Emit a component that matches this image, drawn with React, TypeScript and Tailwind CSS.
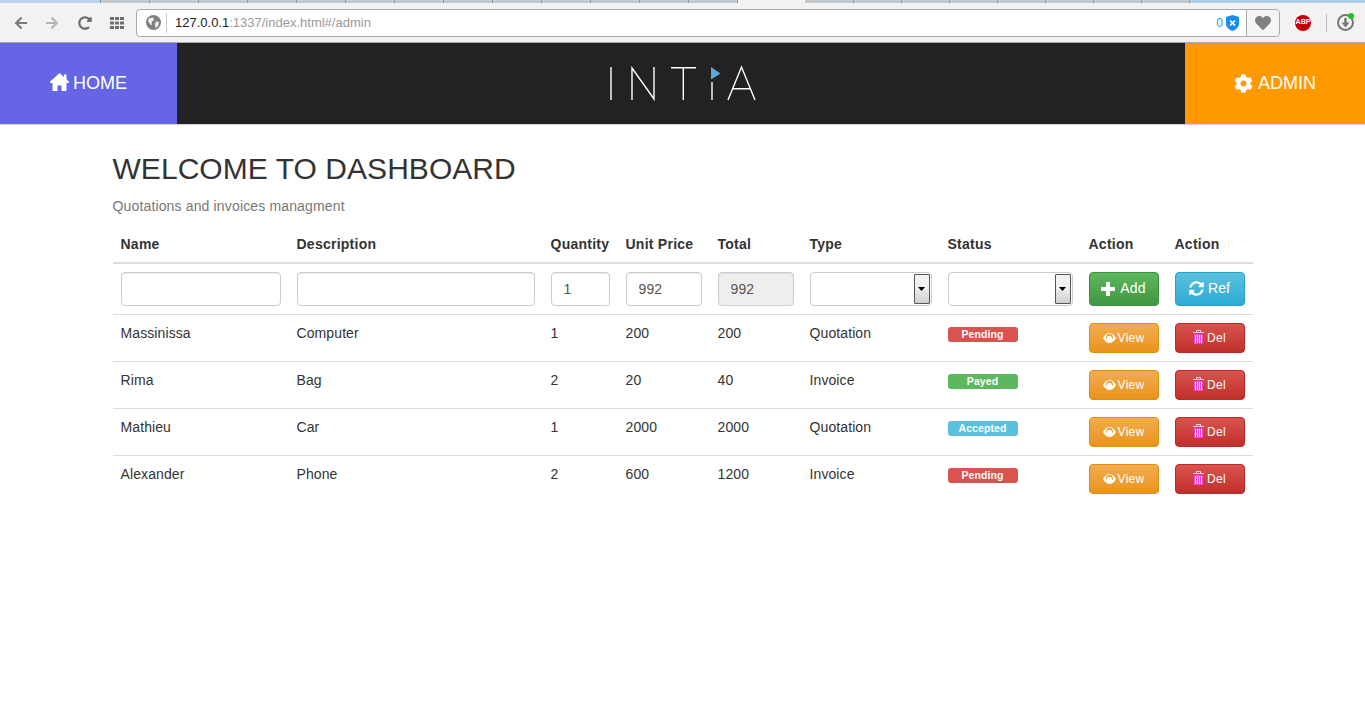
import type { ReactNode } from "react";
import { FaCog, FaSyncAlt, FaHeart, FaArrowLeft, FaArrowRight, FaRedoAlt } from "react-icons/fa";

const rows = [
  { name: "Massinissa", desc: "Computer", qty: "1", price: "200", total: "200", type: "Quotation", status: "Pending", color: "bg-[#d9534f]" },
  { name: "Rima", desc: "Bag", qty: "2", price: "20", total: "40", type: "Invoice", status: "Payed", color: "bg-[#5cb85c]" },
  { name: "Mathieu", desc: "Car", qty: "1", price: "2000", total: "2000", type: "Quotation", status: "Accepted", color: "bg-[#5bc0de]" },
  { name: "Alexander", desc: "Phone", qty: "2", price: "600", total: "1200", type: "Invoice", status: "Pending", color: "bg-[#d9534f]" },
];

const inputBase = "block w-full h-[34px] rounded border border-[#ccc] px-3 text-[14px] tracking-[0.15px] text-[#555] shadow-[inset_0_1px_1px_rgba(0,0,0,0.075)] outline-none";
const inputClass = `${inputBase} bg-white`;

function SelectBox() {
  return (
    <div className="flex h-[34px] w-full items-stretch justify-end rounded border border-[#ccc] bg-white p-px">
      <div className="flex w-[16px] items-center justify-center rounded-[1px] border border-[#555] bg-gradient-to-b from-[#f2f2f2] from-40% to-[#cfcfcf]">
        <svg width="7" height="4" viewBox="0 0 7 4"><path d="M0 0H7L3.5 4Z" fill="#000" /></svg>
      </div>
    </div>
  );
}

function Browser() {
  return (
    <div className="relative h-[43px] border-b border-[#a8a8a8] bg-[#f2f2f2]">
      <div className="flex h-[3px] bg-[#c3c9cf]">
        <div className="w-[101px] border-r border-[#8a9099] bg-[#bcd4ec]" />
        {Array.from({ length: 13 }).map((_, i) => (
          <div key={i} className="w-[49px] shrink-0 border-r border-[#8f959b]" />
        ))}
        <div className="w-[67px] shrink-0 bg-[#f2f2f2]" />
        <div className="w-[49px] shrink-0 border-r border-[#8f959b]" />
        {Array.from({ length: 7 }).map((_, i) => (
          <div key={i} className="w-[48px] shrink-0 border-r border-[#8f959b]" />
        ))}
        <div className="flex-1 bg-[#b3cde8]" />
      </div>
      <div className="flex h-[39px] items-center pl-[14px]">
        <FaArrowLeft size={14} className="text-[#7b7b7b]" />
        <FaArrowRight size={14} className="ml-[17px] text-[#b4b4b4]" />
        <FaRedoAlt size={14} className="ml-[19px] text-[#6e6e6e]" />
        <svg width="14" height="12" viewBox="0 0 14 12" className="ml-[18px]" fill="#6e6e6e">
          <rect x="0" y="0" width="4" height="3" /><rect x="5" y="0" width="4" height="3" /><rect x="10" y="0" width="4" height="3" />
          <rect x="0" y="4.5" width="4" height="3" /><rect x="5" y="4.5" width="4" height="3" /><rect x="10" y="4.5" width="4" height="3" />
          <rect x="0" y="9" width="4" height="3" /><rect x="5" y="9" width="4" height="3" /><rect x="10" y="9" width="4" height="3" />
        </svg>
        <div className="ml-[12px] flex h-[28px] w-[1144px] items-center rounded-[4px] border border-[#a9a9a9] bg-white">
          <svg width="15" height="15" viewBox="0 0 15 15" className="ml-[9px]">
            <circle cx="7.5" cy="7.5" r="7.5" fill="#808080" />
            <path d="M3 3.5L7 2.5L8 5L5.5 7L6 10.5L4 9L2 6ZM10 6.5L13 7L12 11L9.5 13L9 9Z" fill="#f2f2f2" />
          </svg>
          <div className="ml-[5px] h-[20px] w-px bg-[#ccc]" />
          <span className="ml-[8px] text-[13px] text-[#9a9a9a]">
            <span className="text-[#222]">127.0.0.1</span>:1337/index.html#/admin
          </span>
          <span className="ml-auto text-[12px] text-[#2b9af3]">0</span>
          <svg width="13" height="16" viewBox="0 0 13 16" className="ml-[3px] mr-[7px]">
            <path d="M6.5 0L13 2V9C13 12 9.5 15 6.5 16C3.5 15 0 12 0 9V2Z" fill="#1a8cf0" />
            <path d="M4 5.5L9 10.5M9 5.5L4 10.5" stroke="#fff" strokeWidth="1.6" />
          </svg>
          <div className="flex h-full w-[33px] items-center justify-center rounded-r-[4px] border-l border-[#a9a9a9] bg-[#f5f5f5]">
            <FaHeart size={16} className="text-[#808080]" />
          </div>
        </div>
        <div className="ml-[15px] flex h-[16px] w-[16px] items-center justify-center rounded-full bg-[#c00000] text-[7px] font-bold text-white">ABP</div>
        <div className="ml-[15px] h-[18px] w-px bg-[#bbb]" />
        <div className="relative ml-[10px] flex h-[17px] w-[17px] items-center justify-center rounded-full border-2 border-[#777]">
          <svg width="9" height="10" viewBox="0 0 9 10"><path d="M3.2 0H5.8V4.5H8.5L4.5 9.5L0.5 4.5H3.2Z" fill="#777" /></svg>
          <div className="absolute -right-[2px] -top-[3px] h-[6px] w-[6px] rounded-full bg-[#1fc01f]" />
        </div>
      </div>
    </div>
  );
}

function Logo() {
  return (
    <svg width="150" height="39" viewBox="0 0 150 39" className="block">
      <g stroke="#fff" strokeWidth="1.4" fill="none">
        <path d="M2 3V36" />
        <path d="M23 36V4L45 35V3" />
        <path d="M62 3.7H87M74.3 3.7V36" />
        <path d="M103 18V36" />
        <path d="M119 36L132.5 3L146 36M123.5 24.7H141.5" />
      </g>
      <path d="M102 3L111.5 9.5L102 15.5Z" fill="#5aa9dc" />
    </svg>
  );
}

function HomeIcon() {
  return (
    <svg width="19" height="18" viewBox="0 0 19 18" className="-mt-[3px]" fill="#fff">
      <path d="M9.5 0L14 4V1.5H16.5V6.3L19 8.8V10H16.5V18H11.5V12.5H7.5V18H2.5V10H0V8.8Z" />
    </svg>
  );
}

function Nav() {
  return (
    <div className="flex h-[82px] border-b border-[#d0d0d0] bg-[#222] text-white">
      <div className="flex w-[177px] items-center justify-center gap-[4px] bg-[#6565e6] text-[18px]">
        <HomeIcon />
        <span>HOME</span>
      </div>
      <div className="flex flex-1 items-center justify-center pl-[6px]">
        <Logo />
      </div>
      <div className="flex w-[180px] items-center justify-center gap-[5px] bg-[#ff9900] text-[18px]">
        <FaCog size={19} />
        <span>ADMIN</span>
      </div>
    </div>
  );
}

function Btn({ tone, icon, label, big, gap }: { tone: string; icon: ReactNode; label: string; big?: boolean; gap?: string }) {
  return (
    <button className={`flex w-[70px] items-center justify-center rounded border text-white ${tone} ${gap ?? ""} ${big ? "h-[34px] text-[14px] tracking-[0.15px]" : "h-[30px] text-[12px] tracking-[0.25px]"}`}>
      {icon}
      <span>{label}</span>
    </button>
  );
}

function PlusIcon() {
  return (
    <svg width="14" height="14" viewBox="0 0 14 14" fill="#fff">
      <path d="M5 0H9V5H14V9H9V14H5V9H0V5H5Z" />
    </svg>
  );
}

function EyeIcon() {
  return (
    <svg width="13" height="10" viewBox="0 0 13 10">
      <path d="M0 5C2 1.7 4 0 6.5 0S11 1.7 13 5C11 8.3 9 10 6.5 10S2 8.3 0 5Z" fill="#fff" />
      <circle cx="6.5" cy="4.2" r="3.4" fill="#ee9f34" />
      <circle cx="6.5" cy="5.4" r="2.6" fill="#fff" />
    </svg>
  );
}

function TrashIcon() {
  return (
    <svg width="11" height="14" viewBox="0 0 11 14" fill="none" className="-mt-[2px] shrink-0">
      <path d="M3.5 2V0.5H7.5V2" stroke="#ffd0f2" strokeWidth="1" />
      <path d="M0 2.5H11" stroke="#ffc0ee" strokeWidth="1" />
      <path d="M1.5 4.5V13.5H9.5V4.5Z" stroke="#f540d0" strokeWidth="1" fill="#fff" />
      <path d="M3.5 5V13M5.5 5V13M7.5 5V13" stroke="#f540d0" strokeWidth="1" />
    </svg>
  );
}

const th = "h-[39px] border-b-2 border-[#ddd] px-2 pt-[2px] text-left align-middle text-[14px] font-bold tracking-[0.25px] text-[#333]";
const td = "h-[47px] border-b border-[#ddd] px-2 pt-2 align-top text-[14px] leading-[20px] tracking-[0.1px] text-[#333]";
const tdLast = "h-[47px] px-2 pt-2 align-top text-[14px] leading-[20px] tracking-[0.1px] text-[#333]";
const tc = "border-b border-[#ddd] px-2 align-middle";
const viewTone = "border-[#e38d13] bg-gradient-to-b from-[#f0ad4e] to-[#eb9316]";
const delTone = "border-[#b92c28] bg-gradient-to-b from-[#d9534f] to-[#c12e2a]";

export default function App() {
  return (
    <div className="min-h-[702px] bg-white font-['Liberation_Sans',Arial,sans-serif]">
      <Browser />
      <Nav />
      <main className="mx-auto w-[1140px] pt-[27px]">
        <h1 className="text-[30px] leading-[33px] tracking-[0.05px] text-[#333]">WELCOME TO DASHBOARD</h1>
        <p className="mt-[11px] text-[14px] leading-[20px] tracking-[0.15px] text-[#777]">Quotations and invoices managment</p>
        <table className="mt-[8px] w-[1140px] table-fixed border-collapse">
          <colgroup>
            <col className="w-[176px]" />
            <col className="w-[254px]" />
            <col className="w-[75px]" />
            <col className="w-[92px]" />
            <col className="w-[92px]" />
            <col className="w-[138px]" />
            <col className="w-[141px]" />
            <col className="w-[86px]" />
            <col className="w-[86px]" />
          </colgroup>
          <thead>
            <tr>
              {["Name", "Description", "Quantity", "Unit Price", "Total", "Type", "Status", "Action", "Action"].map((h, i) => (
                <th key={i} className={th}>{h}</th>
              ))}
            </tr>
          </thead>
          <tbody>
            <tr>
              <td className={`h-[51px] ${tc}`}><input className={inputClass} readOnly /></td>
              <td className={tc}><input className={inputClass} readOnly /></td>
              <td className={tc}><input className={inputClass} value="1" readOnly /></td>
              <td className={tc}><input className={inputClass} value="992" readOnly /></td>
              <td className={tc}><input className={`${inputBase} bg-[#eee]`} value="992" readOnly /></td>
              <td className={tc}><SelectBox /></td>
              <td className={tc}><SelectBox /></td>
              <td className={tc}>
                <Btn big gap="gap-[5px]" tone="border-[#3e8f3e] bg-gradient-to-b from-[#5cb85c] to-[#419641]" icon={<PlusIcon />} label="Add" />
              </td>
              <td className={tc}>
                <Btn big gap="gap-[4px]" tone="border-[#28a4c9] bg-gradient-to-b from-[#5bc0de] to-[#2aabd2]" icon={<FaSyncAlt size={15} />} label="Ref" />
              </td>
            </tr>
            {rows.map((r, i) => {
              const c = i === rows.length - 1 ? tdLast : td;
              return (
                <tr key={r.name}>
                  <td className={c}>{r.name}</td>
                  <td className={c}>{r.desc}</td>
                  <td className={c}>{r.qty}</td>
                  <td className={c}>{r.price}</td>
                  <td className={c}>{r.total}</td>
                  <td className={c}>{r.type}</td>
                  <td className={c}>
                    <div className={`mt-[4px] flex h-[15px] w-[70px] items-center justify-center rounded-[3px] text-[10.5px] font-bold leading-none text-white ${r.color}`}>
                      {r.status}
                    </div>
                  </td>
                  <td className={c}><Btn gap="gap-[2px]" tone={viewTone} icon={<EyeIcon />} label="View" /></td>
                  <td className={c}><Btn gap="gap-[3px]" tone={delTone} icon={<TrashIcon />} label="Del" /></td>
                </tr>
              );
            })}
          </tbody>
        </table>
      </main>
    </div>
  );
}
